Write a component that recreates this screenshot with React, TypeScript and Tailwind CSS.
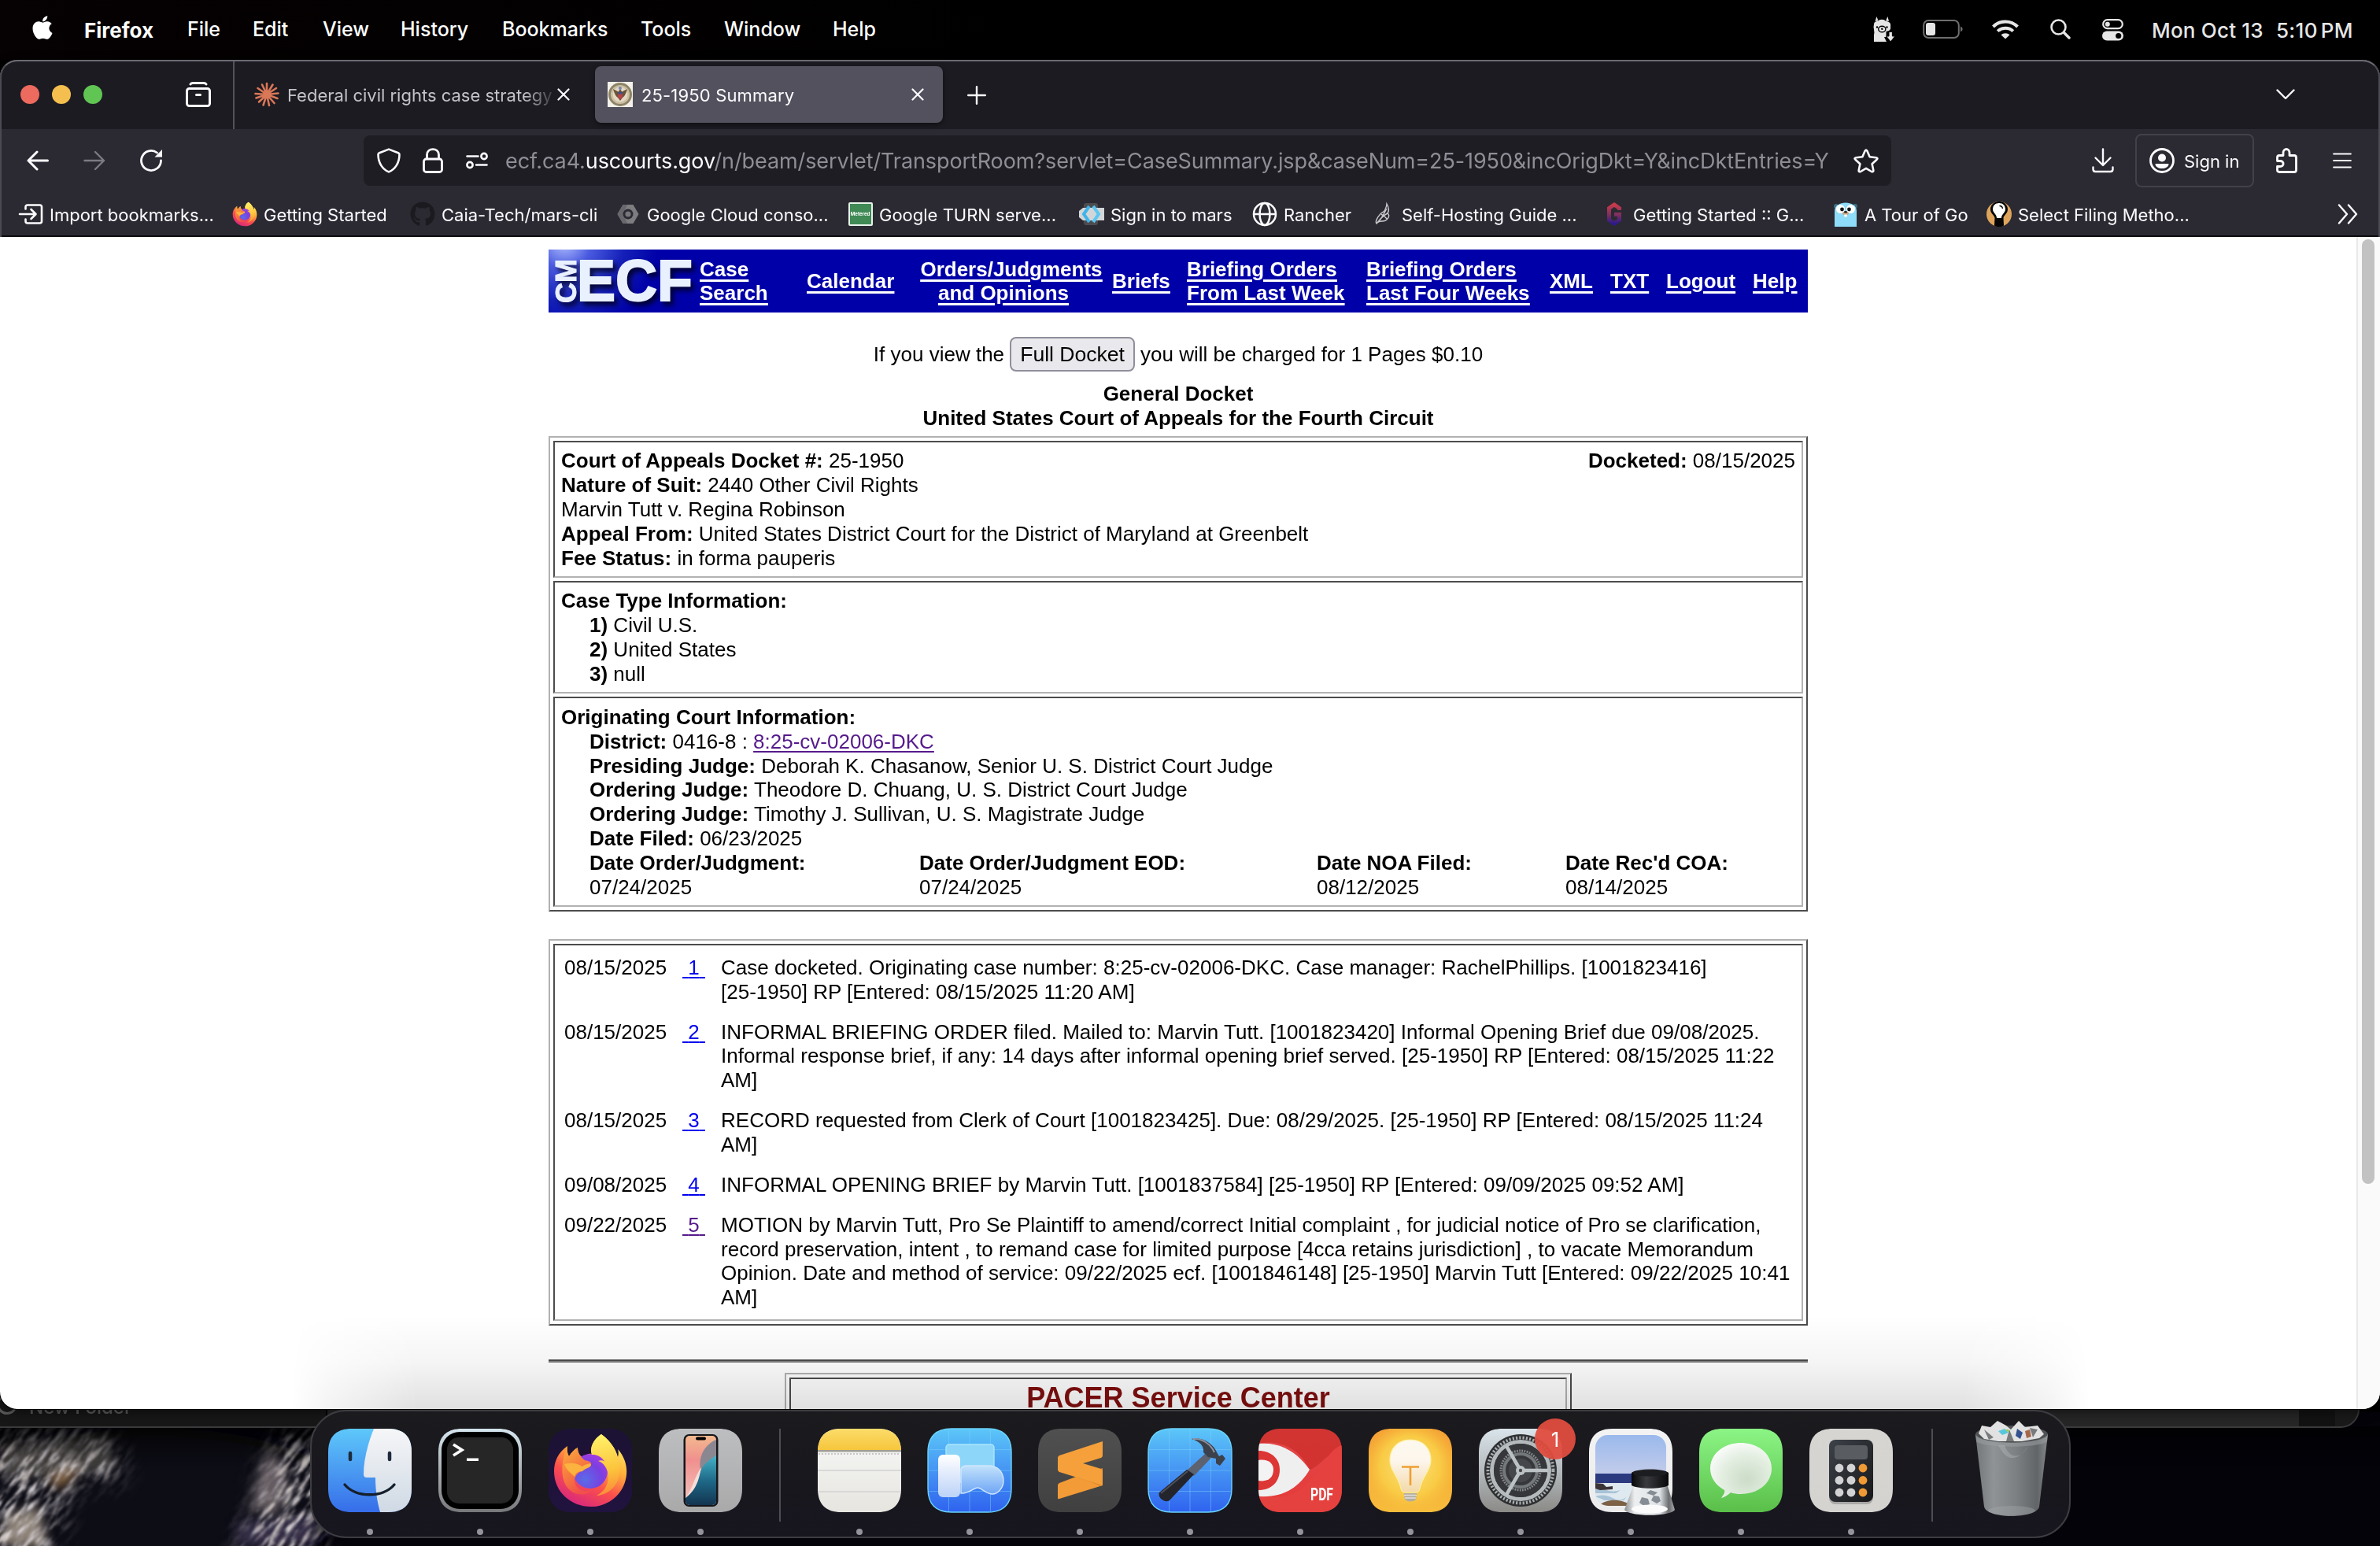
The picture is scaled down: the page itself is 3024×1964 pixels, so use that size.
import type { ReactNode } from 'react';
import { FaApple, FaGithub } from 'react-icons/fa';

/* ---------- shared drawings ---------- */

function FirefoxMark({ id, className }: { id: string; className: string }) {
  return (
    <svg viewBox="0 0 96 96" className={className}>
      <defs>
        <linearGradient id={`${id}body`} x1="0.8" y1="0.05" x2="0.3" y2="1">
          <stop offset="0" stopColor="#fff36a" />
          <stop offset="0.35" stopColor="#ffb03a" />
          <stop offset="0.65" stopColor="#fb4f4c" />
          <stop offset="1" stopColor="#d8267e" />
        </linearGradient>
        <radialGradient id={`${id}globe`} cx="0.35" cy="0.75" r="0.9">
          <stop offset="0" stopColor="#5a6be8" />
          <stop offset="0.55" stopColor="#7a3fe0" />
          <stop offset="1" stopColor="#b33ae6" />
        </radialGradient>
        <linearGradient id={`${id}flame`} x1="0.4" y1="0" x2="0.5" y2="1">
          <stop offset="0" stopColor="#fff26a" />
          <stop offset="0.6" stopColor="#fcc43c" />
          <stop offset="1" stopColor="#f98a3a" />
        </linearGradient>
        <linearGradient id={`${id}head`} x1="0" y1="0" x2="0.5" y2="1">
          <stop offset="0" stopColor="#fbb23c" />
          <stop offset="0.5" stopColor="#f7803e" />
          <stop offset="1" stopColor="#f2504a" />
        </linearGradient>
      </defs>
      <path
        d="M62 2 C73 10 80 20 83 31 C84 27 84 24 83 21 C92 31 95 43 94 53 C92 77 72 94 49 94 C23 94 2 75 2 49 C2 37 7 25 19 17 C18 22 19 27 21 30 C24 25 28 21 32 19 C32 25 34 29 39 32 C43 27 48 26 50 27 C47 17 54 7 62 2Z"
        fill={`url(#${id}body)`}
      />
      <circle cx="48" cy="49" r="22" fill={`url(#${id}globe)`} />
      <path
        d="M62 2 C73 10 81 21 83 33 C91 58 78 78 56 80 C68 74 73 62 70 50 C68 43 64 38 58 36 C61 35 64 35 67 37 C62 29 56 28 50 28 C46 18 54 7 62 2Z"
        fill={`url(#${id}flame)`}
      />
      <path
        d="M19 17 C18 22 19 27 21 30 C24 25 28 21 32 19 C32 26 35 30 41 35 C46 36 50 37 49 41 C48 45 41 45 38 49 C33 50 29 54 28 60 C28 70 38 77 50 73 C42 82 25 80 17 67 C10 55 11 35 19 17Z"
        fill={`url(#${id}head)`}
      />
      <path d="M15 40 C22 38 30 38 38 43 C42 40 49 38 49 41 C48 45 41 45 38 49 C32 49 29 52 28 56 C24 52 17 47 15 40Z" fill="#fbb23f" />
    </svg>
  );
}

/* ---------- macOS menu bar ---------- */

const MENUS = [
  { label: 'File', w: 'w-[83px]' },
  { label: 'Edit', w: 'w-[89px]' },
  { label: 'View', w: 'w-[99px]' },
  { label: 'History', w: 'w-[129px]' },
  { label: 'Bookmarks', w: 'w-[176px]' },
  { label: 'Tools', w: 'w-[106px]' },
  { label: 'Window', w: 'w-[138px]' },
  { label: 'Help', w: 'w-[60px]' },
];

function MenuBar() {
  return (
    <header className="flex h-[76px] w-full items-center whitespace-nowrap bg-gradient-to-r from-[#060102] to-black pl-[37px] pr-[32px] font-['Inter'] text-[25px] font-medium text-white">
      <FaApple className="mt-[-6px] size-[34px]" />
      <span className="ml-[36px] w-[131px] text-[26px] font-bold">Firefox</span>
      {MENUS.map((m) => (
        <span key={m.label} className={m.w}>{m.label}</span>
      ))}
      <div className="ml-auto flex items-center text-[#e6e6e6]">
        <svg viewBox="0 0 28 34" className="mr-[2px] mt-[-3px] h-[34px] w-[28px]" fill="#e6e6e6">
          <path d="M2.6 7 L4.4 1 L6.6 6.4 M16 6.4 L18.4 1 L20 7Z" />
          <path d="M1 11 C1 7 5 7 6 7 C8 4 14 4 16 7 C20 7 23 9 22 14 C23 17 20 19 20 19 L16.5 20 L16.5 27 L14 27 L17 33 L1 33 L1 24 C2 21 1 20 1 17 C0 14 1 12 1 11Z" />
          <circle cx="5" cy="14.5" r="1.2" fill="#000" />
          <circle cx="17.5" cy="14.5" r="1.2" fill="#000" />
          <ellipse cx="11.3" cy="17" rx="4.6" ry="3.8" fill="#e6e6e6" stroke="#000" strokeWidth="1.4" />
          <circle cx="11.3" cy="16.7" r="1.2" fill="#000" />
          <path d="M20 20.5 h4.4 v5.5 h3.4 L22.2 33 L16.6 26 H20Z" stroke="#000" strokeWidth="1" />
        </svg>
        <svg viewBox="0 0 52 26" className="ml-[33px] mt-[-2px] h-[26px] w-[52px]">
          <rect x="1.2" y="2" width="44.6" height="22" rx="6" fill="none" stroke="#6e6e6e" strokeWidth="2" />
          <rect x="4" y="5" width="12" height="16" rx="3" fill="#e6e6e6" />
          <path d="M48 9.5 C51.5 11 51.5 15 48 16.5Z" fill="#6e6e6e" />
        </svg>
        <svg viewBox="0 0 34 26" className="ml-[36px] mt-[-2px] h-[26px] w-[34px]" fill="none" stroke="#e6e6e6" strokeWidth="4">
          <path d="M1.5 10 C10 1.2 24 1.2 32.500 10" />
          <path d="M7.200 15.600 C12.500 10.400 21.500 10.400 26.800 15.600" />
          <path d="M17 25.500 L11.500 20.300 C14.500 17.600 19.500 17.600 22.500 20.300Z" fill="#e6e6e6" stroke="none" />
        </svg>
        <svg viewBox="0 0 26 26" className="ml-[40px] mt-[-2px] size-[26px]" fill="none" stroke="#e6e6e6" strokeLinecap="round">
          <circle cx="10.500" cy="10.500" r="9" strokeWidth="2.600" />
          <path d="M17.500 17.500 L24 24" strokeWidth="3.400" />
        </svg>
        <svg viewBox="0 0 27 28" className="ml-[40px] mt-[-1px] h-[28px] w-[27px]">
          <rect x="1.200" y="1.200" width="24.600" height="11" rx="5.500" fill="none" stroke="#e6e6e6" strokeWidth="2.200" />
          <circle cx="6.800" cy="6.700" r="3" fill="#e6e6e6" />
          <rect x="0" y="15.500" width="27" height="12" rx="6" fill="#e6e6e6" />
          <circle cx="20.700" cy="21.500" r="3.600" fill="#000" />
        </svg>
        <span className="ml-[36px] w-[158px] text-[26px] tracking-[0.200px]">Mon Oct 13</span>
        <span className="w-[100px] text-[26px] tracking-[0.300px]">5:10<span className="ml-[4px]">PM</span></span>
      </div>
    </header>
  );
}

/* ---------- Firefox chrome ---------- */

function CloseX({ className }: { className: string }) {
  return (
    <svg viewBox="0 0 16 16" className={className} stroke="#fbfbfe" strokeWidth="2.200" strokeLinecap="round">
      <path d="M1.500 1.500 L14.500 14.500 M14.500 1.500 L1.500 14.500" />
    </svg>
  );
}

function SealIcon() {
  return (
    <svg viewBox="0 0 32 32" className="size-8 shrink-0">
      <rect width="32" height="32" fill="#f4f1ea" />
      <circle cx="16" cy="16" r="15" fill="#8d8468" />
      <circle cx="16" cy="16" r="12" fill="#cdbfa2" />
      <circle cx="16" cy="16" r="9.500" fill="#e3d9c6" />
      <path d="M7 9 C9 16 11 19 13 20 L16 24 L19 20 C21 19 23 16 25 9 C22 11 20 11 18.500 13 L16 9 L13.500 13 C12 11 10 11 7 9Z" fill="#6c5236" />
      <path d="M13 13 h6 v5 c0 3 -3 4 -3 4 s-3 -1 -3 -4Z" fill="#b5434a" />
      <path d="M13 12.500 h6 v3 h-6Z" fill="#41507f" />
      <circle cx="16" cy="8" r="2" fill="#7489b0" />
    </svg>
  );
}

function TabStrip() {
  return (
    <div className="flex h-[88px] items-center bg-[#1c1b22] pl-[26px] font-['Inter'] text-[22px]">
      <div className="flex gap-4">
        <span className="size-6 rounded-full bg-[#ed6a5e]" />
        <span className="size-6 rounded-full bg-[#f4bf4f]" />
        <span className="size-6 rounded-full bg-[#61c554]" />
      </div>
      <svg viewBox="0 0 32 32" className="ml-[106px] size-8" fill="none" stroke="#fbfbfe" strokeWidth="3" strokeLinecap="round" strokeLinejoin="round">
        <path d="M6 3 C7 1.500 8 1.500 9 1.500 H23 C24 1.500 25 1.500 26 3" />
        <rect x="1.500" y="8.500" width="29" height="22" rx="3" />
        <path d="M13.500 16.500 h5" />
      </svg>
      <span className="ml-7 h-full w-[2px] bg-[#52515c]" />
      <div className="flex w-[458px] items-center pl-[25px]">
        <svg viewBox="-16 -16 32 32" className="size-8 shrink-0" stroke="#d97757" strokeWidth="2.600" strokeLinecap="round">
          <path d="M0 0 L0 -14 M0 0 L7.500 -12.500 M0 0 L12 -8 M0 0 L14.500 -1.500 M0 0 L13.500 5 M0 0 L9.500 11 M0 0 L3 14 M0 0 L-4.500 13.500 M0 0 L-10 9.500 M0 0 L-13.500 4.500 M0 0 L-14.500 -1 M0 0 L-11.500 -8 M0 0 L-6 -12.500" />
        </svg>
        <span className="ml-[10px] mt-[2px] w-[336px] whitespace-nowrap text-[#c3c2c9] [mask-image:linear-gradient(to_right,black_300px,transparent_345px)]">
          Federal civil rights case strategy
        </span>
        <CloseX className="ml-[7px] size-4" />
      </div>
      <div className="flex h-[72px] w-[442px] items-center rounded-[8px] bg-[#52515d] pl-4 pr-6 text-[#fbfbfe] shadow-[0_2px_6px_rgba(0,0,0,0.5)]">
        <SealIcon />
        <span className="ml-[11px] mt-[2px] whitespace-nowrap tracking-[0.150px]">25-1950 Summary</span>
        <CloseX className="ml-auto size-4" />
      </div>
      <svg viewBox="0 0 24 24" className="ml-[31px] mt-[2px] size-6" stroke="#fbfbfe" strokeWidth="2.400" strokeLinecap="round">
        <path d="M12 1.200 V22.800 M1.200 12 H22.800" />
      </svg>
      <svg viewBox="0 0 24 14" className="ml-auto mr-[108px] h-[14px] w-6" fill="none" stroke="#fbfbfe" strokeWidth="2.400" strokeLinecap="round" strokeLinejoin="round">
        <path d="M1.500 1.500 L12 12 L22.500 1.500" />
      </svg>
    </div>
  );
}

function NavBar() {
  return (
    <div className="flex h-20 items-center bg-[#2b2a33] pl-[34px] text-[#fbfbfe]">
      <svg viewBox="0 0 28 26" className="h-[26px] w-7" fill="none" stroke="#fbfbfe" strokeWidth="3" strokeLinecap="round" strokeLinejoin="round">
        <path d="M26.500 13 H2 M13 2 L2 13 L13 24" />
      </svg>
      <svg viewBox="0 0 28 26" className="ml-11 h-[26px] w-7" fill="none" stroke="#7c7b82" strokeWidth="2.400" strokeLinecap="round" strokeLinejoin="round">
        <path d="M1.500 13 H26 M15 2 L26 13 L15 24" />
      </svg>
      <svg viewBox="0 0 30 30" className="ml-[43px] size-[30px]" fill="none" stroke="#fbfbfe" strokeWidth="2.800" strokeLinecap="round">
        <path d="M27.500 15 A12.500 12.500 0 1 1 22.500 5" />
        <path d="M29 1 V10.500 H19.500Z" fill="#fbfbfe" stroke="none" />
      </svg>
      <div className="ml-[255px] flex h-16 w-[1941px] items-center rounded-[8px] bg-[#1e1d24] pl-[17px] pr-4">
        <svg viewBox="0 0 30 32" className="h-8 w-[30px]" fill="none" stroke="#fbfbfe" strokeWidth="2.600" strokeLinejoin="round">
          <path d="M15 1.600 L27 6.200 C28 6.600 28.500 7.200 28.500 8.200 C28.500 19 23 27 15 30.400 C7 27 1.500 19 1.500 8.200 C1.500 7.200 2 6.600 3 6.200Z" />
        </svg>
        <svg viewBox="0 0 26 32" className="ml-[28px] h-8 w-[26px]" fill="none" stroke="#fbfbfe" strokeWidth="2.800">
          <rect x="1.500" y="14" width="23" height="16.500" rx="3" />
          <path d="M5.500 14 V8.500 C5.500 -0.800 20.500 -0.800 20.500 8.500 V14" />
        </svg>
        <svg viewBox="0 0 28 22" className="ml-[29px] h-[22px] w-7" fill="none" stroke="#fbfbfe" strokeWidth="2.600" strokeLinecap="round">
          <circle cx="23" cy="5.500" r="3.600" />
          <path d="M1.500 5.500 H15.500 M13 16.500 H26.500" />
          <circle cx="5" cy="16.500" r="3.600" />
        </svg>
        <span className="ml-[22px] mt-[3px] whitespace-nowrap font-['Inter'] text-[27px] tracking-[-0.100px] text-[#8f8e96]">
          ecf.ca4.<span className="text-[#fbfbfe]">uscourts.gov</span>/n/beam/servlet/TransportRoom?servlet=CaseSummary.jsp&amp;caseNum=25-1950&amp;incOrigDkt=Y&amp;incDktEntries=Y
        </span>
        <svg viewBox="0 0 32 31" className="ml-auto h-[31px] w-8 shrink-0" fill="none" stroke="#fbfbfe" strokeWidth="2.600" strokeLinejoin="round">
          <path d="M14.700 2.600 Q16 0.600 17.300 2.600 L20.600 10.300 L28.800 11.200 Q31.600 11.700 29.600 13.700 L23.600 19.200 L25.300 27.300 Q25.500 30 23 29 L16 24.800 L9 29 Q6.500 30 6.700 27.300 L8.400 19.200 L2.400 13.700 Q0.400 11.700 3.200 11.200 L11.400 10.300Z" />
        </svg>
      </div>
      <svg viewBox="0 0 28 32" className="ml-[255px] h-8 w-7" fill="none" stroke="#fbfbfe" strokeWidth="2.400" strokeLinecap="round" strokeLinejoin="round">
        <path d="M14 1.500 V21.500 M4.500 12.500 L14 22 L23.500 12.500" />
        <path d="M1.500 24.500 V27 C1.500 29.500 2.500 30 4.500 30 H23.500 C25.500 30 26.500 29.500 26.500 27 V24.500" />
      </svg>
      <div className="ml-[27px] flex h-[68px] w-[151px] items-center rounded-[8px] border-2 border-[#42414a] pl-4 font-['Inter'] text-[22px]">
        <svg viewBox="0 0 32 32" className="size-8">
          <circle cx="16" cy="16" r="14.500" fill="none" stroke="#fbfbfe" strokeWidth="2.800" />
          <circle cx="16" cy="12.500" r="5" fill="#fbfbfe" />
          <path d="M7.500 20 H24.500 C24.500 28 7.500 28 7.500 20Z" fill="#fbfbfe" />
        </svg>
        <span className="ml-3 mt-[2px] whitespace-nowrap">Sign in</span>
      </div>
      <svg viewBox="0 0 27 32" className="ml-7 h-8 w-[27px]" fill="none" stroke="#fbfbfe" strokeWidth="2.800" strokeLinejoin="round">
        <path d="M9 9.500 V6 C9 0 17 0 17 6 V9.500 H23 Q25.500 9.500 25.500 12 V28 Q25.500 30.500 23 30.500 H4 Q1.500 30.500 1.500 28 V23.500 H5 C10.500 23.500 10.500 16.500 5 16.500 H1.500 V12 Q1.500 9.500 4 9.500Z" />
      </svg>
      <svg viewBox="0 0 24 20" className="ml-[45px] h-5 w-6" stroke="#fbfbfe" strokeWidth="2.200" strokeLinecap="round">
        <path d="M1.200 1.500 H22.800 M1.200 10 H22.800 M1.200 18.500 H22.800" />
      </svg>
    </div>
  );
}

const BOOKMARKS: { w: string; label: string; icon: ReactNode }[] = [
  {
    w: 'w-[272px]',
    label: 'Import bookmarks...',
    icon: (
      <svg viewBox="0 0 32 26" className="h-[26px] w-8" fill="none" stroke="#fbfbfe" strokeWidth="2.600" strokeLinecap="round" strokeLinejoin="round">
        <path d="M9.500 6.500 V4 Q9.500 1.500 12 1.500 H27.500 Q30 1.500 30 4 V22 Q30 24.500 27.500 24.500 H12 Q9.500 24.500 9.500 22 V19.500" />
        <path d="M2 13 H22 M16.500 7 L22.500 13 L16.500 19" />
      </svg>
    ),
  },
  { w: 'w-[226px]', label: 'Getting Started', icon: <FirefoxMark id="bm" className="size-8" /> },
  { w: 'w-[261px]', label: 'Caia-Tech/mars-cli', icon: <FaGithub className="size-8 text-[#1b1a1f]" /> },
  {
    w: 'w-[295px]',
    label: 'Google Cloud conso...',
    icon: (
      <svg viewBox="0 0 32 32" className="size-8">
        <path d="M9.500 4 H22.500 L29.500 16 L22.500 28 H9.500 L2.500 16Z" fill="#7d7d80" />
        <path d="M9.500 4 H15 L10 16 L15 28 H9.500 L2.500 16Z" fill="#68686c" />
        <circle cx="16" cy="16" r="6.500" fill="#2b2a33" />
        <circle cx="16" cy="16" r="3.600" fill="#77777a" />
      </svg>
    ),
  },
  {
    w: 'w-[294px]',
    label: 'Google TURN serve...',
    icon: (
      <span className="flex h-[30px] w-[31px] items-center justify-center rounded-[2px] border-2 border-[#e8f2ea] bg-[#3f8a55] font-['Inter'] text-[6px] font-bold text-white">
        Metered
      </span>
    ),
  },
  {
    w: 'w-[220px]',
    label: 'Sign in to mars',
    icon: (
      <svg viewBox="0 0 32 28" className="h-7 w-8">
        <rect x="6" width="18" height="28" rx="3" fill="#4c4c50" />
        <path d="M0 10 L5 6 H32 V22 H5 L0 18Z" fill="#d3d6d8" />
        <path d="M13 4 L6 14 L13 24" fill="none" stroke="#3fb4e8" strokeWidth="4" />
        <path d="M18 4 L25 14 L18 24" fill="none" stroke="#5cc6f2" strokeWidth="4" />
      </svg>
    ),
  },
  {
    w: 'w-[150px]',
    label: 'Rancher',
    icon: (
      <svg viewBox="0 0 32 32" className="size-8" fill="none" stroke="#fbfbfe" strokeWidth="2.500">
        <circle cx="16" cy="16" r="14" />
        <ellipse cx="16" cy="16" rx="6.500" ry="14" />
        <path d="M2 16 H30" />
      </svg>
    ),
  },
  {
    w: 'w-[294px]',
    label: 'Self-Hosting Guide ...',
    icon: (
      <svg viewBox="0 0 32 32" className="size-8" fill="none" stroke="#c9c9cd" strokeWidth="1.400">
        <path d="M21 3 C24 8 24 12 22 15 C26 18 22 25 15 25 C12 25 9 26 8 28 C6 26 9 20 12 17 C14 13 19 14 19 10 C20 8 21 6 21 3Z" />
        <path d="M21 9 C18 14 17 17 12 24 M22 15 C18 17 14 20 9 27 M14 16 C16 18 19 19 21 22" />
      </svg>
    ),
  },
  {
    w: 'w-[294px]',
    label: 'Getting Started :: G...',
    icon: (
      <svg viewBox="0 0 32 32" className="size-8" fill="none" strokeWidth="5">
        <defs>
          <linearGradient id="gitea" x1="0" y1="0" x2="0" y2="1">
            <stop offset="0" stopColor="#c73a4a" />
            <stop offset="0.550" stopColor="#7d2f60" />
            <stop offset="1" stopColor="#2c1a8c" />
          </linearGradient>
        </defs>
        <path d="M22.500 11 V8.500 L16 4 L9.500 8.500 V23.500 L16 28 L22.500 23.500 V16.500 H16" stroke="url(#gitea)" />
      </svg>
    ),
  },
  {
    w: 'w-[195px]',
    label: 'A Tour of Go',
    icon: (
      <svg viewBox="0 0 32 32" className="size-8">
        <circle cx="4" cy="6" r="3" fill="#3f6f80" />
        <circle cx="28" cy="6" r="3" fill="#3f6f80" />
        <path d="M2 32 V12 C2 -2 30 -2 30 12 V32Z" fill="#8edcf9" />
        <circle cx="9.500" cy="9.500" r="5.500" fill="#fff" />
        <circle cx="22.500" cy="9.500" r="5.500" fill="#fff" />
        <circle cx="11.500" cy="10" r="2.400" fill="#151515" />
        <circle cx="20.500" cy="10" r="2.400" fill="#151515" />
        <ellipse cx="16" cy="15" rx="4" ry="2.300" fill="#cba583" />
        <ellipse cx="16" cy="13.200" rx="2" ry="1.300" fill="#222" />
        <rect x="14.300" y="16.500" width="3.400" height="3" fill="#fff" />
      </svg>
    ),
  },
  {
    w: 'w-[446px]',
    label: 'Select Filing Metho...',
    icon: (
      <svg viewBox="0 0 32 32" className="size-8">
        <circle cx="16" cy="16" r="16" fill="#dea45c" />
        <path d="M16 0 C22 0 27 4 27 10 C27 15 21.500 18 21.500 21 L22 30 Q22 32 16 32 Q10 32 10 30 L10.500 21 C10.500 18 5 15 5 10 C5 4 10 0 16 0Z" fill="#050505" />
        <path d="M16 2 C21 2 24 5 24 10 C24 14 19 16 19 21 H13 C13 16 8 14 8 10 C8 5 11 2 16 2Z" fill="#fff" />
        <path d="M16.500 5.500 Q20 5.500 20.500 9" fill="none" stroke="#050505" strokeWidth="1.400" />
      </svg>
    ),
  },
];

function BookmarksBar() {
  return (
    <div className="flex h-[57px] items-center whitespace-nowrap border-b-2 border-[#0c0c0e] bg-[#2b2a33] pl-[23px] font-['Inter'] text-[22px] text-[#fbfbfe]">
      {BOOKMARKS.map((b) => (
        <div key={b.label} className={`${b.w} flex shrink-0 items-center`}>
          <span className="flex w-8 shrink-0 justify-center">{b.icon}</span>
          <span className="ml-2 mt-[3px]">{b.label}</span>
        </div>
      ))}
      <svg viewBox="0 0 26 26" className="size-[26px]" fill="none" stroke="#fbfbfe" strokeWidth="2.400" strokeLinecap="round" strokeLinejoin="round">
        <path d="M2 1.500 L12 13 L2 24.500 M14 1.500 L24 13 L14 24.500" />
      </svg>
    </div>
  );
}

/* ---------- court docket page ---------- */

const OUTER = 'border-2 border-l-[#b2b2b2] border-t-[#b2b2b2] border-r-[#4c4c4c] border-b-[#4c4c4c] p-1';
const INNER = 'border-2 border-l-[#4c4c4c] border-t-[#4c4c4c] border-r-[#b2b2b2] border-b-[#b2b2b2]';

function EcfLogo() {
  return (
    <div className="h-20 w-[192px] shrink-0 bg-[radial-gradient(circle_at_20px_-10px,#b4c2ff_0px,#4a5be0_34px,#1420b8_76px,#0000a8_120px)] font-['Liberation_Sans'] font-bold">
      <svg viewBox="0 0 192 80" className="h-20 w-[192px] drop-shadow-[4px_5px_3px_rgba(0,0,30,0.85)]" fill="#e9f1ff" stroke="#e9f1ff">
        <text x="0" y="0" fontSize="36" strokeWidth="1" transform="translate(35 68) rotate(-90)" textLength="56" lengthAdjust="spacingAndGlyphs">CM</text>
        <text x="36" y="65" fontSize="75" strokeWidth="2" textLength="147" lengthAdjust="spacingAndGlyphs">ECF</text>
      </svg>
    </div>
  );
}

function EcfNav() {
  return (
    <nav className="flex h-20 items-center whitespace-nowrap bg-[#0000a8] text-[26px] font-bold leading-[30px] text-white underline decoration-[3px] underline-offset-[4px]">
      <EcfLogo />
      <a className="w-[136px]">Case<br />Search</a>
      <a className="w-[144px]">Calendar</a>
      <a className="mr-[12px] w-[232px] text-center">Orders/Judgments<br /><span className="mr-5">and Opinions</span></a>
      <a className="w-[95px]">Briefs</a>
      <a className="w-[228px]">Briefing Orders<br />From Last Week</a>
      <a className="w-[233px]">Briefing Orders<br />Last Four Weeks</a>
      <a className="w-[77px]">XML</a>
      <a className="w-[71px]">TXT</a>
      <a className="w-[110px]">Logout</a>
      <a>Help</a>
    </nav>
  );
}

const ENTRIES = [
  { date: '08/15/2025', no: 1, color: 'text-[#0000ee]', lines: ['Case docketed. Originating case number: 8:25-cv-02006-DKC. Case manager: RachelPhillips. [1001823416]', '[25-1950] RP [Entered: 08/15/2025 11:20 AM]'] },
  { date: '08/15/2025', no: 2, color: 'text-[#0000ee]', lines: ['INFORMAL BRIEFING ORDER filed. Mailed to: Marvin Tutt. [1001823420] Informal Opening Brief due 09/08/2025.', 'Informal response brief, if any: 14 days after informal opening brief served. [25-1950] RP [Entered: 08/15/2025 11:22', 'AM]'] },
  { date: '08/15/2025', no: 3, color: 'text-[#0000ee]', lines: ['RECORD requested from Clerk of Court [1001823425]. Due: 08/29/2025. [25-1950] RP [Entered: 08/15/2025 11:24', 'AM]'] },
  { date: '09/08/2025', no: 4, color: 'text-[#0000ee]', lines: ['INFORMAL OPENING BRIEF by Marvin Tutt. [1001837584] [25-1950] RP [Entered: 09/09/2025 09:52 AM]'] },
  { date: '09/22/2025', no: 5, color: 'text-[#551a8b]', lines: ['MOTION by Marvin Tutt, Pro Se Plaintiff to amend/correct Initial complaint , for judicial notice of Pro se clarification,', 'record preservation, intent , to remand case for limited purpose [4cca retains jurisdiction] , to vacate Memorandum', 'Opinion. Date and method of service: 09/22/2025 ecf. [1001846148] [25-1950] Marvin Tutt [Entered: 09/22/2025 10:41', 'AM]'] },
];

const ORDER_DATES = [
  { w: 'w-[419px]', label: 'Date Order/Judgment:', value: '07/24/2025' },
  { w: 'w-[505px]', label: 'Date Order/Judgment EOD:', value: '07/24/2025' },
  { w: 'w-[316px]', label: 'Date NOA Filed:', value: '08/12/2025' },
  { w: 'w-[220px]', label: "Date Rec'd COA:", value: '08/14/2025' },
];

function DocketPage() {
  return (
    <main className="flex flex-1 flex-col items-center overflow-hidden whitespace-nowrap pt-4 font-['Liberation_Sans',sans-serif] text-[26px] leading-[31px] text-black">
      <div className="w-[1600px] shrink-0">
        <EcfNav />
        <p className="mt-[31px] flex h-11 items-center justify-center pt-px">
          If you view the
          <button className="mx-[7px] mt-[-1px] h-11 w-[159px] rounded-[8px] border-2 border-[#8f8f9d] bg-[#e9e9ed] text-[26.67px] leading-[40px] tracking-[-0.050px]">Full Docket</button>
          you will be charged for 1 Pages $0.10
        </p>
        <h1 className="mt-[13px] text-center font-bold">
          General Docket<br />United States Court of Appeals for the Fourth Circuit
        </h1>

        <section className={`${OUTER} mt-[7px] flex flex-col gap-1`}>
          <div className={`${INNER} flex h-[174px] justify-between px-2 pt-2`}>
            <div>
              <p><b>Court of Appeals Docket #:</b> 25-1950</p>
              <p><b>Nature of Suit:</b> 2440 Other Civil Rights</p>
              <p>Marvin Tutt v. Regina Robinson</p>
              <p><b>Appeal From:</b> United States District Court for the District of Maryland at Greenbelt</p>
              <p><b>Fee Status:</b> in forma pauperis</p>
            </div>
            <p><b>Docketed:</b> 08/15/2025</p>
          </div>
          <div className={`${INNER} h-[143px] pl-2 pt-2`}>
            <p><b>Case Type Information:</b></p>
            <div className="pl-9">
              <p><b>1)</b> Civil U.S.</p>
              <p><b>2)</b> United States</p>
              <p><b>3)</b> null</p>
            </div>
          </div>
          <div className={`${INNER} h-[267px] pl-2 pt-[9px]`}>
            <p><b>Originating Court Information:</b></p>
            <div className="pl-9">
              <p><b>District:</b> 0416-8 : <a className="text-[#551a8b] underline decoration-2 underline-offset-[3px]">8:25-cv-02006-DKC</a></p>
              <p className="h-[30px]"><b>Presiding Judge:</b> Deborah K. Chasanow, Senior U. S. District Court Judge</p>
              <p><b>Ordering Judge:</b> Theodore D. Chuang, U. S. District Court Judge</p>
              <p><b>Ordering Judge:</b> Timothy J. Sullivan, U. S. Magistrate Judge</p>
              <p><b>Date Filed:</b> 06/23/2025</p>
              <div className="flex">
                {ORDER_DATES.map((d) => (
                  <p key={d.label} className={d.w}><b>{d.label}</b><br />{d.value}</p>
                ))}
              </div>
            </div>
          </div>
        </section>

        <section className={`${OUTER} mt-[35px]`}>
          <div className={`${INNER} flex h-[479px] flex-col gap-[20.400px] pl-3 pt-[13px] leading-[30.670px]`}>
            {ENTRIES.map((e) => (
              <div key={e.no} className="flex">
                <span className="w-[150px]">{e.date}</span>
                <a className={`${e.color} w-[49px] underline decoration-2 underline-offset-[3px]`}>&nbsp;{e.no}&nbsp;</a>
                <p className="tracking-[0.010px]">
                  {e.lines.map((l) => (
                    <span key={l} className="block">{l}</span>
                  ))}
                </p>
              </div>
            ))}
          </div>
        </section>

        <hr className="mt-[43px] h-1 border-0 border-t-2 border-[#4d4d4d] bg-[#808080]" />

        <section className={`${OUTER} mx-auto mt-[13px] h-[120px] w-[1000px]`}>
          <div className={`${INNER} h-full pt-[3px] text-center text-[36px] font-bold leading-[42px] text-[#800f0f]`}>PACER Service Center</div>
        </section>
      </div>
    </main>
  );
}

/* ---------- Dock ---------- */

const RR = 'M30 0 H76 C96 0 106 10 106 30 V76 C106 96 96 106 76 106 H30 C10 106 0 96 0 76 V30 C0 10 10 0 30 0Z';

function Tile({ id, stops, children }: { id: string; stops: [number, string][]; children?: ReactNode }) {
  return (
    <svg viewBox="0 0 106 106" className="size-[106px] overflow-visible">
      <defs>
        <linearGradient id={`${id}bg`} x1="0" y1="0" x2="0" y2="1">
          {stops.map(([o, c]) => (
            <stop key={o} offset={o} stopColor={c} />
          ))}
        </linearGradient>
        <clipPath id={`${id}clip`}><path d={RR} /></clipPath>
      </defs>
      <path d={RR} fill={`url(#${id}bg)`} />
      {children}
    </svg>
  );
}

const Finder = () => (
  <Tile id="finder" stops={[[0, '#5ec8fa'], [1, '#366de9']]}>
    <defs>
      <linearGradient id="finderFace" x1="0" y1="0" x2="0" y2="1">
        <stop offset="0" stopColor="#f6f6f8" />
        <stop offset="1" stopColor="#cfd9e4" />
      </linearGradient>
    </defs>
    <g clipPath="url(#finderclip)">
      <path d="M58 0 C50 20 45 40 45 58 Q45 62 49 62 H60 C60 78 62 92 66 106 H110 V0Z" fill="url(#finderFace)" />
    </g>
    <path d="M28 31 V39 M78 31 V39" stroke="#1d2b3c" strokeWidth="4.500" strokeLinecap="round" />
    <path d="M21 71 C35 88 70 88 84 71" fill="none" stroke="#15202c" strokeWidth="3.400" strokeLinecap="round" />
  </Tile>
);

const Terminal = () => (
  <Tile id="term" stops={[[0, '#d5e6ef'], [0.5, '#a9aeb2'], [1, '#77787a']]}>
    <rect x="4" y="4" width="98" height="98" rx="23" fill="#000" />
    <rect x="11" y="11" width="84" height="84" rx="15" fill="#262626" />
    <path d="M19 20 L30 27 L19 34" fill="none" stroke="#fff" strokeWidth="3.600" />
    <rect x="36" y="37.500" width="15" height="3.500" fill="#fff" />
  </Tile>
);

const FirefoxTile = () => (
  <div className="flex size-[106px] items-center justify-center rounded-[26px] bg-gradient-to-b from-[#1c1233] to-[#20133f]">
    <FirefoxMark id="dock" className="size-[96px]" />
  </div>
);

const PhoneMirror = () => (
  <Tile id="phone" stops={[[0, '#bdbec0'], [1, '#a9a9aa']]}>
    <defs>
      <linearGradient id="phoneA" x1="0" y1="0" x2="0" y2="1">
        <stop offset="0" stopColor="#f3b98e" />
        <stop offset="0.350" stopColor="#f0908e" />
        <stop offset="1" stopColor="#f3c8c0" />
      </linearGradient>
      <linearGradient id="phoneB" x1="0" y1="0" x2="0" y2="1">
        <stop offset="0" stopColor="#46b3c8" />
        <stop offset="0.500" stopColor="#1f6a88" />
        <stop offset="1" stopColor="#123450" />
      </linearGradient>
      <clipPath id="phoneScreen"><rect x="34" y="9" width="39" height="88" rx="5" /></clipPath>
    </defs>
    <rect x="31.500" y="7" width="44" height="92" rx="7" fill="#15161a" />
    <g clipPath="url(#phoneScreen)">
      <rect x="34" y="9" width="39" height="88" fill="url(#phoneA)" />
      <path d="M73 14 C58 20 50 36 53 52 L73 36Z" fill="#8a8791" />
      <path d="M73 34 C60 42 54 48 51 60 C48 76 40 82 34 88 V97 H73Z" fill="url(#phoneB)" />
      <path d="M54 49 C46 60 42 78 34 88 C44 80 50 72 54 49Z" fill="#f6ddd8" />
    </g>
    <rect x="47" y="10.500" width="13" height="4" rx="2" fill="#000" />
  </Tile>
);

const Notes = () => (
  <Tile id="notes" stops={[[0, '#f8f8f8'], [1, '#e6e5df']]}>
    <defs>
      <linearGradient id="notesTop" x1="0" y1="0" x2="0" y2="1">
        <stop offset="0" stopColor="#fbdc6a" />
        <stop offset="1" stopColor="#f6c63c" />
      </linearGradient>
    </defs>
    <g clipPath="url(#notesclip)">
      <rect width="106" height="27" fill="url(#notesTop)" />
      <rect y="27" width="106" height="2.500" fill="#a19e94" />
      <path d="M1 32 H105" stroke="#c7c7c5" strokeWidth="2" strokeDasharray="2 2" />
      <path d="M0 53 H106 M0 80 H106" stroke="#d2d2d4" strokeWidth="1.600" />
    </g>
  </Tile>
);

const GridLines = () => (
  <path d="M26.500 1 V105 M53 1 V105 M79.500 1 V105 M1 26.500 H105 M1 53 H105 M1 79.500 H105" stroke="#7ed3fb" strokeOpacity="0.450" strokeWidth="1" />
);

const Freeform = () => (
  <Tile id="ff" stops={[[0, '#5cc6f8'], [1, '#2f63ef']]}>
    <defs>
      <linearGradient id="ffw" x1="0" y1="0" x2="0" y2="1">
        <stop offset="0" stopColor="#ffffff" />
        <stop offset="1" stopColor="#bcd2f8" />
      </linearGradient>
      <linearGradient id="ffb" x1="0" y1="0" x2="0" y2="1">
        <stop offset="0" stopColor="#c2e2fb" />
        <stop offset="1" stopColor="#6ea5f5" />
      </linearGradient>
    </defs>
    <GridLines />
    <path d={RR} fill="none" stroke="#6ad4fb" strokeWidth="1.400" />
    <rect x="23" y="20" width="61" height="48" rx="4" fill="#8ed6f9" stroke="#a9e6fd" strokeWidth="1.400" />
    <path d="M42 52 Q42 47 50 47 H76 C90 47 96 56 96 66 C96 76 88 83 82 83 C74 83 68 75 63 75 C58 75 52 83 42 82Z" fill="url(#ffb)" stroke="#cfe6fd" strokeWidth="1.400" />
    <rect x="13" y="33" width="28" height="54" rx="6" fill="url(#ffw)" />
  </Tile>
);

const Sublime = () => (
  <Tile id="subl" stops={[[0, '#505050'], [1, '#404040']]}>
    <path d="M48 61 L82 72 L27 89 Q25 90 25 88 V72 Q25 70 27 69Z" fill="#f29b37" />
    <path d="M50 61 L82 50 V70 Q82 72 80 73Z" fill="#d9862e" />
    <path d="M82 16 V34 Q82 36 80 37 L57 44 L80 51 Q82 52 82 54 V72 L27 55 Q25 54 25 52 V37 Q25 35 27 34Z" fill="#f5a03a" />
  </Tile>
);

const Xcode = () => (
  <Tile id="xc" stops={[[0, '#5cc6f8'], [1, '#2f63ef']]}>
    <GridLines />
    <path d={RR} fill="none" stroke="#6ad4fb" strokeWidth="1.400" />
    <path d="M72 32 L80 37 L58 60 L48 54Z" fill="#5c6270" />
    <path d="M49 52 L58 58 L27 91 C22 95 11 88 14 81Z" fill="#24252c" />
    <path d="M50 54 L16 82" stroke="#4d4f59" strokeWidth="2" />
    <path d="M55 13 C68 10 82 18 87 30 L90 35 L94 33 L98 38 L91 47 L86 44 L86 38 L76 36 L70 30 C71 22 65 16 55 13Z" fill="#3c404b" />
    <path d="M57 13 C68 12 79 19 84 30" fill="none" stroke="#8b91a0" strokeWidth="2" />
  </Tile>
);

const PdfExpert = () => (
  <Tile id="pdf" stops={[[0, '#e2474a'], [1, '#e53a38']]}>
    <g clipPath="url(#pdfclip)">
      <path d="M20 0 H106 V24 C84 34 78 48 65 52 C50 20 20 14 0 19 V0Z" fill="#cd2f2c" opacity="0.800" />
      <path d="M0 19 C32 16 52 34 65 52 C52 74 32 88 0 86Z" fill="#efeff0" />
      <path d="M0 28 C16 28 27 38 27 52 C27 68 16 78 0 78Z" fill="#dd3735" />
      <path d="M0 40 C12 38 19 44 19 52 C19 62 12 68 0 66Z" fill="#f3f3f4" />
      <path d="M106 21 C84 26 78 70 40 84 C28 88 12 88 0 86 V106 H106Z" fill="#e5413e" />
    </g>
    <text x="66" y="91" textLength="29" lengthAdjust="spacingAndGlyphs" fontFamily="Roboto" fontSize="22" fontWeight="700" fill="#fff">PDF</text>
  </Tile>
);

const Bulb = () => (
  <Tile id="bulb" stops={[[0, '#f39a33'], [1, '#f7bd3c']]}>
    <defs>
      <radialGradient id="bulbGlow" cx="0.500" cy="0.450" r="0.600">
        <stop offset="0" stopColor="#fbe27a" />
        <stop offset="0.600" stopColor="#f9cb45" />
        <stop offset="1" stopColor="#f7b83a" stopOpacity="0" />
      </radialGradient>
      <linearGradient id="bulbGlass" x1="0" y1="0" x2="0" y2="1">
        <stop offset="0" stopColor="#fdf9ee" />
        <stop offset="0.400" stopColor="#fdf6ec" />
        <stop offset="1" stopColor="#f3d9a8" />
      </linearGradient>
    </defs>
    <path d={RR} fill="url(#bulbGlow)" />
    <path d="M53 14 C69 14 79 25 79 40 C79 54 68 60 65 76 Q64 81 60 81 H46 Q42 81 41 76 C38 60 27 54 27 40 C27 25 37 14 53 14Z" fill="url(#bulbGlass)" stroke="#fdf0a0" strokeWidth="1.200" />
    <path d="M42 48.500 H64 M53 49 V72" stroke="#ee9f33" strokeWidth="2.600" />
    <path d="M44.500 82 H61.500 L60 90 Q53 95 46 90Z" fill="#b3ada2" />
    <path d="M45 84.500 H61 M46 88 H60" stroke="#e2dfd8" strokeWidth="1.400" />
  </Tile>
);

const Settings = () => (
  <Tile id="set" stops={[[0, '#d9e4ea'], [0.500, '#b4babd'], [1, '#8b8a87']]}>
    <circle cx="53" cy="53" r="46" fill="#2f3032" />
    <circle cx="53" cy="53" r="41.500" fill="none" stroke="#a9aeb1" strokeWidth="4" strokeDasharray="2.200 2.100" />
    <circle cx="53" cy="53" r="36.500" fill="none" stroke="#b4b9bc" strokeWidth="5" />
    <circle cx="53" cy="53" r="34" fill="#36373a" />
    <circle cx="53" cy="53" r="25" fill="none" stroke="#85898c" strokeWidth="3" strokeDasharray="1.800 1.400" />
    <circle cx="53" cy="53" r="21" fill="none" stroke="#74787a" strokeWidth="4" />
    <circle cx="53" cy="53" r="15" fill="#45474a" />
    <path d="M53 53 H88 M53 53 L35 22 M53 53 L35 84" stroke="#bcc1c4" strokeWidth="4.500" />
    <circle cx="53" cy="53" r="6" fill="#bcc1c4" />
    <circle cx="53" cy="53" r="2.200" fill="#4a4a4a" />
  </Tile>
);

const Preview = () => (
  <Tile id="prev" stops={[[0, '#f3f3f4'], [1, '#ebebeb']]}>
    <defs>
      <clipPath id="prevPhoto"><rect x="8" y="8" width="90" height="90" rx="16" /></clipPath>
      <linearGradient id="prevSky" x1="0" y1="0" x2="0" y2="1">
        <stop offset="0" stopColor="#9ab9ec" />
        <stop offset="1" stopColor="#c3ccea" />
      </linearGradient>
      <linearGradient id="prevGlass" x1="0" y1="0" x2="1" y2="0">
        <stop offset="0" stopColor="#8a8d90" />
        <stop offset="0.200" stopColor="#eceeef" />
        <stop offset="0.700" stopColor="#dfe3e7" />
        <stop offset="0.880" stopColor="#6a6c6f" />
        <stop offset="1" stopColor="#a5a7aa" />
      </linearGradient>
      <linearGradient id="prevCap" x1="0" y1="0" x2="1" y2="0">
        <stop offset="0" stopColor="#08080a" />
        <stop offset="0.400" stopColor="#3a3b3f" />
        <stop offset="1" stopColor="#08080a" />
      </linearGradient>
    </defs>
    <g clipPath="url(#prevPhoto)">
      <rect x="8" y="8" width="90" height="50" fill="url(#prevSky)" />
      <rect x="8" y="57" width="90" height="14" fill="#2c3a80" />
      <rect x="8" y="69" width="90" height="30" fill="#dfe9f0" />
      <path d="M8 74 Q14 70 20 76 T40 78 L34 82 H8Z M8 86 Q20 82 30 88 T48 86 L44 91 L20 91Z" fill="#a9c3d6" />
      <path d="M8 69 L18 70 L22 74 L30 73 L30 77 L14 78 L8 76Z" fill="#3b3436" />
      <path d="M12 98 C20 90 36 88 50 95 L50 99 H12Z" fill="#7c6144" />
    </g>
    <path d="M56 73 L45 103 C50 112 104 112 109 103 L100 73Z" fill="url(#prevGlass)" />
    <path d="M64 94 l3 -7 l8 2 l2 7 l-6 3Z M79 91 l3 -6 l7 1 l2 6 l-5 3Z M73 82 l5 -4 l9 3 l-5 4Z" fill="#767d85" opacity="0.850" />
    <ellipse cx="77" cy="102" rx="23" ry="5.500" fill="#fbfbfb" />
    <path d="M54 56 C60 50 95 50 101 56 V72 C92 77 63 77 54 72Z" fill="url(#prevCap)" />
    <ellipse cx="77.500" cy="56.500" rx="22" ry="4" fill="#1c1d20" />
  </Tile>
);

const Messages = () => (
  <Tile id="msg" stops={[[0, '#8bf585'], [1, '#5abf49']]}>
    <defs>
      <radialGradient id="msgBubble" cx="0.600" cy="0.650" r="0.750">
        <stop offset="0" stopColor="#cbdcc8" />
        <stop offset="0.550" stopColor="#e3eee1" />
        <stop offset="1" stopColor="#ffffff" />
      </radialGradient>
    </defs>
    <path d="M53 18 C75 18 92 32 92 50.500 C92 69 75 83 53 83 C48 83 44 82.500 40 81 C37 84 32 87 28 88 C31 84 33 81 32 78 C21 72 14 62 14 50.500 C14 32 31 18 53 18Z" fill="url(#msgBubble)" />
  </Tile>
);

const KEY_ROWS = [50, 65.500, 81];

const Calculator = () => (
  <Tile id="calc" stops={[[0, '#d6d5d2'], [1, '#d4d3d0']]}>
    <defs>
      <linearGradient id="calcBody" x1="0" y1="0" x2="1" y2="1">
        <stop offset="0" stopColor="#3d4249" />
        <stop offset="1" stopColor="#17181a" />
      </linearGradient>
    </defs>
    <rect x="25" y="16" width="56" height="80" rx="8" fill="#000" opacity="0.200" />
    <rect x="25" y="14" width="56" height="79" rx="8" fill="url(#calcBody)" />
    <rect x="32" y="21" width="42" height="18" rx="4" fill="#595c60" />
    {KEY_ROWS.map((y) => (
      <g key={y}>
        <circle cx="38" cy={y} r="5.400" fill="#d2d3d4" />
        <circle cx="53" cy={y} r="5.400" fill="#d2d3d4" />
        <circle cx="68" cy={y} r="5.400" fill="#f09a35" />
      </g>
    ))}
  </Tile>
);

const Trash = () => (
  <svg viewBox="0 0 94 123" className="h-[123px] w-[94px] overflow-visible">
    <defs>
      <linearGradient id="bin" x1="0" y1="0" x2="1" y2="0">
        <stop offset="0" stopColor="#737779" />
        <stop offset="0.250" stopColor="#8f9395" />
        <stop offset="0.550" stopColor="#7d8183" />
        <stop offset="0.850" stopColor="#616567" />
        <stop offset="1" stopColor="#85898b" />
      </linearGradient>
    </defs>
    <path d="M1 18 L12 110 C15 126 79 126 82 110 L93 18Z" fill="url(#bin)" />
    <ellipse cx="47" cy="18" rx="46" ry="11" fill="#4e5254" />
    <path d="M5 17 L9 7 L20 9 L29 1 L40 7 L46 12 L56 1 L64 9 L80 7 L88 18 L82 23 L60 27 L30 27 L12 24Z" fill="#e2e2e2" />
    <path d="M12 12 L24 22 L18 25Z M44 12 L40 27 L50 27Z M70 10 L74 22 L80 12Z" fill="#787b7e" />
    <path d="M54 11 l7 5 l-3 8 l-6 -4Z" fill="#34508f" />
    <path d="M64 14 l6 -2 l2 9 l-6 2Z" fill="#a5674a" />
    <path d="M30 14 l8 -3 l5 5 l-8 3Z" fill="#58c6dd" />
    <path d="M38 12 l5 0 l1 4Z" fill="#8ccf55" />
    <path d="M1 18 C8 32 86 32 93 18 L92 27 C84 36 10 36 2 27Z" fill="#9a9ea0" opacity="0.550" />
    <path d="M30 32 C44 60 60 46 68 32 C60 50 44 50 38 32Z" fill="#b5b9bb" opacity="0.400" />
    <ellipse cx="47" cy="115" rx="30" ry="6" fill="#a4a8aa" opacity="0.400" />
  </svg>
);

const DOCK_LEFT = [
  { name: 'Finder', el: <Finder /> },
  { name: 'Terminal', el: <Terminal /> },
  { name: 'Firefox', el: <FirefoxTile /> },
  { name: 'iPhone Mirroring', el: <PhoneMirror /> },
];

const DOCK_RIGHT: { name: string; el: ReactNode; badge?: string }[] = [
  { name: 'Notes', el: <Notes /> },
  { name: 'Freeform', el: <Freeform /> },
  { name: 'Sublime Text', el: <Sublime /> },
  { name: 'Xcode', el: <Xcode /> },
  { name: 'PDF Expert', el: <PdfExpert /> },
  { name: 'Tips', el: <Bulb /> },
  { name: 'System Settings', el: <Settings />, badge: '1' },
  { name: 'Preview', el: <Preview /> },
  { name: 'Messages', el: <Messages /> },
  { name: 'Calculator', el: <Calculator /> },
];

function DockItem({ children, badge }: { children: ReactNode; badge?: string }) {
  return (
    <div className="relative flex w-[106px] flex-col items-center">
      {children}
      <span className="mt-[21px] size-2 rounded-full bg-[#94939b]" />
      {badge && (
        <span className="absolute right-[-17px] top-[-13px] flex size-[52px] items-center justify-center rounded-full bg-[#e04c3f]/95 font-['Inter'] text-[26px] text-white">{badge}</span>
      )}
    </div>
  );
}

function Dock() {
  return (
    <div className="absolute left-[394px] top-[1791px] z-20 flex h-[163px] w-[2237px] gap-[34px] rounded-[46px] border-2 border-[#3c3c41] bg-gradient-to-b from-[#1b1a1d] to-[#17151e] pl-[21px] pt-[22px]">
      {DOCK_LEFT.map((d) => (
        <DockItem key={d.name}>{d.el}</DockItem>
      ))}
      <span className="ml-[13px] mr-[13px] h-[118px] w-[2px] bg-[#4e4d54]" />
      {DOCK_RIGHT.map((d) => (
        <DockItem key={d.name} badge={d.badge}>{d.el}</DockItem>
      ))}
      <span className="ml-[15px] mr-[19px] h-[118px] w-[2px] bg-[#4e4d54]" />
      <div className="mt-[-11px]"><Trash /></div>
    </div>
  );
}

/* ---------- desktop ---------- */

function Wallpaper() {
  return (
    <svg viewBox="0 0 3024 170" className="absolute bottom-0 left-0 h-[170px] w-[3024px]">
      <defs>
        <filter id="streaks" x="0" y="0" width="1" height="1">
          <feTurbulence type="fractalNoise" baseFrequency="0.040 0.160" numOctaves="4" seed="11" />
          <feColorMatrix values="0.8 0.7 0 0 -0.26  0.72 0.7 0.05 0 -0.28  0.62 0.7 0.2 0 -0.28  2.4 2 0 0 -1.85" />
          <feGaussianBlur stdDeviation="0.800" />
        </filter>
        <filter id="soft" x="-0.500" y="-0.500" width="2" height="2"><feGaussianBlur stdDeviation="16" /></filter>
        <filter id="glow" x="-1" y="-1" width="3" height="3"><feGaussianBlur stdDeviation="7" /></filter>
        <linearGradient id="topShade" x1="0" y1="0" x2="0" y2="1">
          <stop offset="0" stopColor="#000" stopOpacity="0.700" />
          <stop offset="1" stopColor="#000" stopOpacity="0" />
        </linearGradient>
        <mask id="lit">
          <g filter="url(#soft)" fill="#fff">
            <path d="M-40 20 L130 20 L160 80 L90 90 L60 190 L-40 190Z" opacity="0.850" />
            <path d="M350 20 L420 20 L400 190 L300 190 L330 110Z" opacity="0.850" />
          </g>
        </mask>
      </defs>
      <rect width="3024" height="170" fill="#04030a" />
      <ellipse cx="200" cy="110" rx="240" ry="90" fill="#090719" filter="url(#soft)" />
      <g filter="url(#glow)">
        <path d="M0 40 L130 30 L150 70 L60 84 L0 80Z" fill="#454341" />
        <path d="M64 84 L98 68 L90 88 L70 98Z" fill="#b58652" opacity="0.700" />
        <path d="M10 130 L50 120 L60 170 L0 170Z" fill="#8f8478" />
        <path d="M338 50 L358 60 L368 100 L350 130 L318 120Z" fill="#6d6468" opacity="0.900" />
        <path d="M300 140 L400 130 L400 170 L300 170Z" fill="#38324a" opacity="0.900" />
      </g>
      <g mask="url(#lit)">
        <rect x="-260" y="-180" width="900" height="620" filter="url(#streaks)" transform="rotate(-50 200 80)" />
      </g>
      <rect width="3024" height="50" y="18" fill="url(#topShade)" />
    </svg>
  );
}

export default function App() {
  return (
    <div className="relative h-[1964px] w-[3024px] overflow-hidden bg-black">
      <Wallpaper />

      {/* window behind the browser */}
      <div className="absolute left-[-20px] top-[1700px] flex h-[114px] w-[3018px] items-end overflow-hidden rounded-r-[24px] border-2 border-[#3a3a3c] bg-[#171717] font-['Inter']">
        <div className="flex h-[40px] w-[434px] items-start border-r-2 border-black pl-[14px] text-[24px] font-medium leading-[26px] text-[#5c5c5e]">
          <span className="mt-[-1px] size-[26px] rounded-full border-[3px] border-[#5c5c5e]" />
          <span className="ml-[15px] mt-[3px]">New Folder</span>
        </div>
        <div className="h-full flex-1 bg-[#262626]" />
        <div className="h-full w-[46px] bg-[#121212]" />
        <div className="h-full w-[29px] bg-[#1a1a1a]" />
      </div>

      <MenuBar />

      {/* browser window */}
      <div className="absolute left-0 top-[76px] z-10 flex h-[1714px] w-[3024px] flex-col overflow-hidden rounded-[22px] bg-white shadow-[0_0_0_1px_#000,0_4px_14px_rgba(0,0,0,0.5)]">
        <div className="relative">
          <TabStrip />
          <NavBar />
          <BookmarksBar />
          <div className="pointer-events-none absolute inset-0 rounded-t-[22px] border-2 border-b-0 border-x-[#4b4a53] border-t-[#6c6b73]" />
        </div>
        <div className="flex min-h-0 flex-1">
          <DocketPage />
          <div className="w-[30px] border-l-2 border-[#e9e9e9] bg-[#fafafa] pl-[5px] pt-[3px]">
            <div className="h-[1200px] w-4 rounded-full bg-[#c2c2c2]" />
          </div>
        </div>
        {/* shade cast by the dock */}
        <div className="pointer-events-none absolute bottom-0 left-[370px] h-[120px] w-[2285px] bg-gradient-to-t from-black/12 via-black/4 to-transparent [mask-image:linear-gradient(to_right,transparent,rgba(0,0,0,0.4)_50px,black_160px,black_2125px,rgba(0,0,0,0.4)_2235px,transparent)]" />
      </div>

      <Dock />
    </div>
  );
}
